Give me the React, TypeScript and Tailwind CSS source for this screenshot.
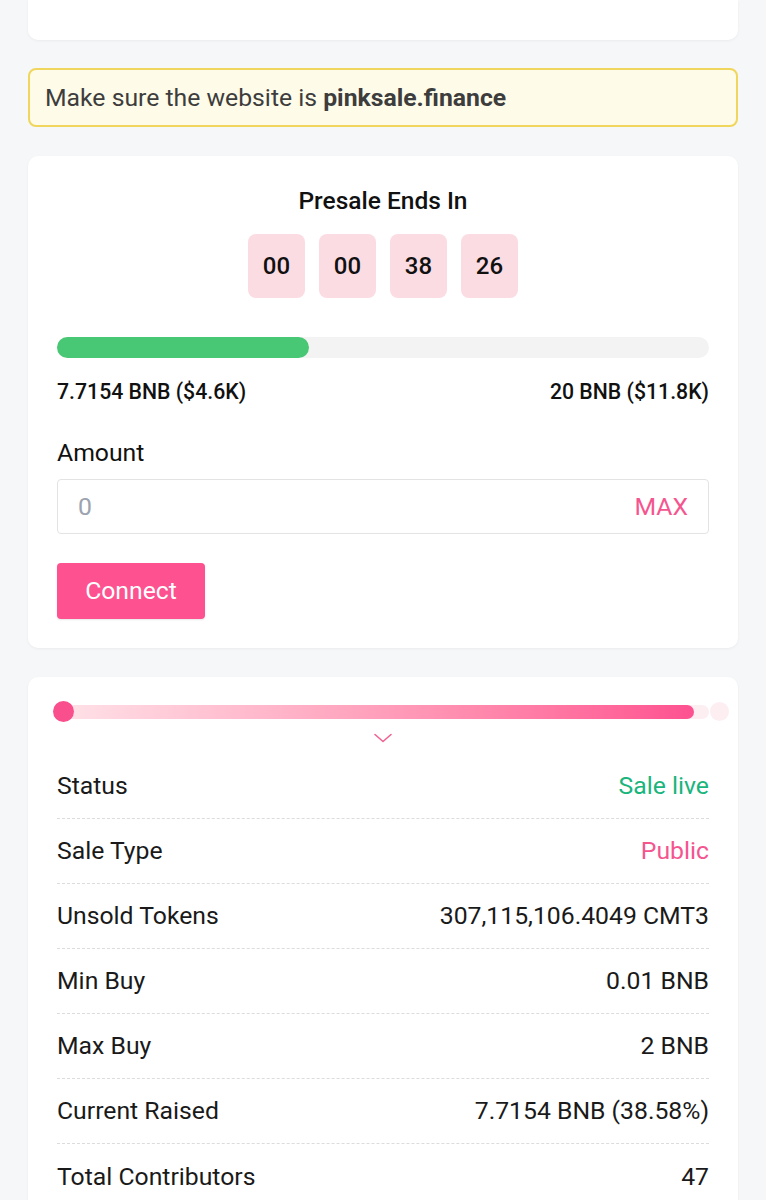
import React from "react";

const rows: { label: string; value: string; cls: string }[] = [
  { label: "Status", value: "Sale live", cls: "text-[#1ab57c]" },
  { label: "Sale Type", value: "Public", cls: "text-[#f5558f]" },
  { label: "Unsold Tokens", value: "307,115,106.4049 CMT3", cls: "text-[#1a1a1a]" },
  { label: "Min Buy", value: "0.01 BNB", cls: "text-[#1a1a1a]" },
  { label: "Max Buy", value: "2 BNB", cls: "text-[#1a1a1a]" },
  { label: "Current Raised", value: "7.7154 BNB (38.58%)", cls: "text-[#1a1a1a]" },
  { label: "Total Contributors", value: "47", cls: "text-[#1a1a1a]" },
];

export default function App() {
  return (
    <div
      className="min-h-[1200px] bg-[#f6f7f9] px-[28px] text-[#1a1a1a]"
      style={{ fontFamily: "Roboto, 'Liberation Sans', sans-serif" }}
    >
      <div className="h-[40px] rounded-b-[10px] bg-white shadow-[0_1px_3px_rgba(0,0,0,0.05)]" />

      <div className="mt-[28px] flex h-[59px] items-center rounded-[8px] border-2 border-[#f0d65c] bg-[#fefbe8] px-[15px] text-[24.75px] text-[#3d3d3d]">
        <span>
          Make sure the website is <span className="font-bold">pinksale.finance</span>
        </span>
      </div>

      <div className="mt-[29px] rounded-[10px] bg-white px-[29px] pb-[29px] pt-[30px] shadow-[0_1px_3px_rgba(0,0,0,0.05)]">
        <div className="text-center text-[24.5px] font-medium leading-[30px] text-[#111]">Presale Ends In</div>
        <div className="mt-[18px] flex justify-center gap-[14px]">
          {["00", "00", "38", "26"].map((v, i) => (
            <div
              key={i}
              className="flex h-[64px] w-[57px] items-center justify-center rounded-[8px] bg-[#fcdce3] text-[24px] font-medium text-[#111]"
            >
              {v}
            </div>
          ))}
        </div>
        <div className="mt-[39px] h-[21px] w-full rounded-full bg-[#f3f3f3]">
          <div className="h-full rounded-full bg-[#48c774]" style={{ width: "38.58%" }} />
        </div>
        <div className="mt-[21px] flex justify-between text-[21.25px] font-medium leading-[26px] text-[#111]">
          <span>7.7154 BNB ($4.6K)</span>
          <span>20 BNB ($11.8K)</span>
        </div>
        <div className="mt-[33px] text-[24.75px] leading-[30px] text-[#111]">Amount</div>
        <div className="mt-[11px] flex h-[55px] items-center justify-between rounded-[4px] border border-[#e3e3e3] pl-[20px] pr-[20px] text-[24.75px]">
          <span className="text-[#9ca3af]">0</span>
          <span className="text-[#f5558f]">MAX</span>
        </div>
        <button className="mt-[29px] flex h-[56px] w-[148px] items-center justify-center rounded-[4px] bg-[#fd5190] text-[24.75px] text-white shadow-[0_1px_2px_rgba(0,0,0,0.1)]">
          Connect
        </button>
      </div>

      <div className="mt-[29px] rounded-t-[10px] bg-white px-[29px] pb-[10px] pt-[24px] shadow-[0_1px_3px_rgba(0,0,0,0.05)]">
        <div className="relative h-[22px]">
          <div className="absolute left-[6px] right-0 top-[4px] h-[14px] rounded-full bg-[#fdeef2]" />
          <div className="absolute left-[6px] right-[15px] top-[4px] h-[14px] rounded-full bg-gradient-to-r from-[#ffe1e8] to-[#fd5190]" />
          <div className="absolute left-[-4px] top-0 h-[21px] w-[21px] rounded-full bg-[#f94f8c]" />
          <div className="absolute right-[-20px] top-[1px] h-[19px] w-[19px] rounded-full bg-[#fdeef2]" />
        </div>
        <div className="mt-[10px] flex justify-center">
          <svg width="18" height="10" viewBox="0 0 18 10" fill="none">
            <path d="M1 1.5 L9 8.5 L17 1.5" stroke="#f06292" strokeWidth="1.6" strokeLinecap="round" strokeLinejoin="round" />
          </svg>
        </div>
        <div className="mt-[11px]">
          {rows.map((r, i) => (
            <div
              key={r.label}
              className={`flex h-[65px] items-center justify-between text-[24.75px] ${
                i < rows.length - 1 ? "border-b border-dashed border-[#dcdcdc]" : ""
              }`}
            >
              <span className="text-[#1a1a1a]">{r.label}</span>
              <span className={r.cls}>{r.value}</span>
            </div>
          ))}
        </div>
      </div>
    </div>
  );
}
